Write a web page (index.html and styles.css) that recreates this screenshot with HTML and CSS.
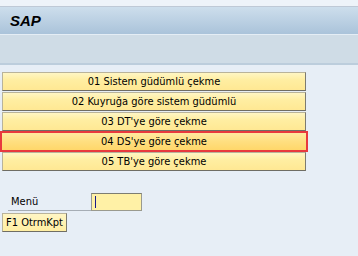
FILE: index.html
```html
<!DOCTYPE html>
<html lang="tr">
<head>
  <meta charset="UTF-8">
  <title>SAP</title>
  <link rel="stylesheet" href="styles.css">
</head>
<body>

  <!-- Başlık -->
  <div class="topline"></div>
  <div class="titlebar">
    <span class="title">SAP</span>
  </div>
  <div class="toolbar"></div>

  <div class="content">
    <div class="menu">
      <div class="btn">01 Sistem güdümlü çekme</div>
      <div class="btn">02 Kuyruğa göre sistem güdümlü</div>
      <div class="btn">03 DT'ye göre çekme</div>
      <div class="btn selected">04 DS'ye göre çekme</div>
      <div class="btn">05 TB'ye göre çekme</div>
    </div>

    <div class="field-row">
      <span class="field-label">Menü</span>
      <div class="field-input"><span class="caret"></span></div>
    </div>

    <div class="fkey">F1 OtrmKpt</div>
  </div>

</body>
</html>
```

FILE: styles.css
```css
body {
  margin: 0;
  background-color: #e7eef6;
  font-family: "DejaVu Sans Condensed", "Liberation Sans", sans-serif;
  font-size: 11px;
  color: #000;
  height: 256px;
  overflow: hidden;
}

.topline {
  height: 6px;
  background: #eef3f9;
  border-bottom: 1px solid #bfc9d6;
}

.titlebar {
  height: 27px;
  background: linear-gradient(to bottom, #cddeec 0%, #aac3da 100%);
  border-bottom: 1px solid #e4edf5;
  display: flex;
  align-items: center;
  padding-left: 10px;
}

.title {
  font-family: "Liberation Sans", sans-serif;
  font-size: 15px;
  font-weight: bold;
  font-style: italic;
}

.toolbar {
  height: 28px;
  background: #cfdce6;
  border-bottom: 2px solid #bccddc;
}

.content {
  padding: 7px 0 0 0;
}

.menu {
  display: flex;
  flex-direction: column;
  gap: 1px;
  width: 308px;
}

.btn {
  margin-left: 2px;
  width: 302px;
  height: 17px;
  line-height: 17px;
  text-align: center;
  background: linear-gradient(to bottom, #fff6c4 0%, #ffeea2 40%, #ffe893 100%);
  border: 1px solid #b9b39a;
  border-right-color: #7d7b70;
  border-bottom-color: #6f6d64;
}

.btn.selected {
  margin-left: 0;
  margin-top: -1px;
  margin-bottom: -1px;
  padding: 0 2px;
  width: 300px;
  height: 17px;
  border: 2px solid #e8393e;
  background: linear-gradient(to bottom, #ffeaa0 0%, #ffdf80 50%, #ffd76a 100%);
}

.field-row {
  display: flex;
  align-items: flex-end;
  margin-top: 22px;
  margin-left: 8px;
}

.field-label {
  width: 83px;
  padding-left: 3px;
  box-sizing: border-box;
  border-bottom: 1px solid #a6adb5;
  line-height: 16px;
}

.field-input {
  width: 49px;
  height: 16px;
  background: #fff1a6;
  border: 1px solid #9a9a8e;
  border-top-color: #7d7d72;
  position: relative;
}

.caret {
  position: absolute;
  left: 3px;
  top: 2px;
  width: 1px;
  height: 12px;
  background: #1a1a8a;
}

.fkey {
  display: inline-block;
  margin: 2px 0 0 2px;
  padding: 0 3px;
  height: 17px;
  line-height: 17px;
  background: linear-gradient(to bottom, #fff6c4 0%, #ffeea2 100%);
  border: 1px solid #b9b39a;
  border-right-color: #7d7b70;
  border-bottom-color: #6f6d64;
}
```
